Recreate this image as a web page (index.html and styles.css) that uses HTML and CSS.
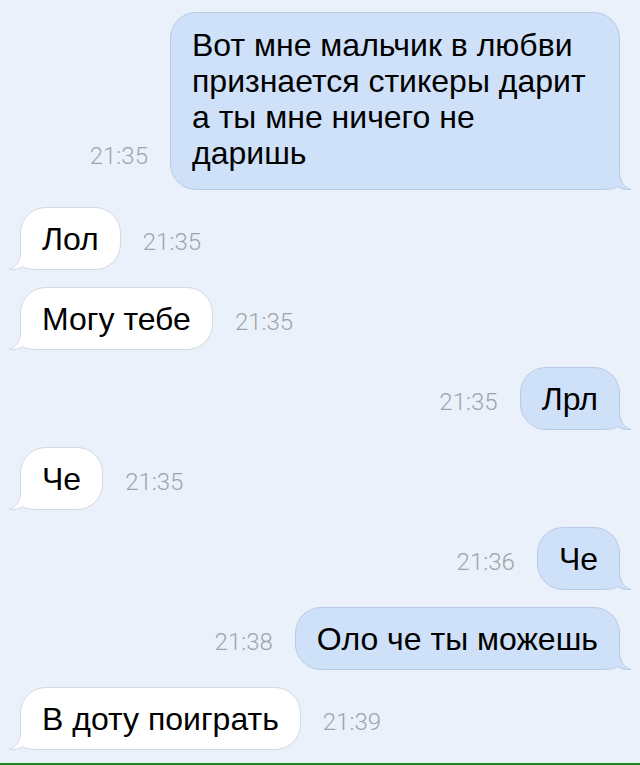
FILE: index.html
```html
<!DOCTYPE html>
<html lang="ru">
<head>
  <meta charset="UTF-8">
  <meta name="viewport" content="width=device-width, initial-scale=1">
  <title>Сообщения</title>
  <link rel="stylesheet" href="styles.css">
</head>
<body>

  <div class="chat">
    <div class="row out">
      <span class="time">21:35</span>
      <div class="bubble big">
        Вот мне мальчик в любви признается стикеры дарит а ты мне ничего не даришь
        <svg class="tail" width="32" height="40" viewBox="0 0 32 40"><path class="fill" d="M12.5 0 L12.5 22 C12.5 31 8 37 1 39.5 C6 40 11 38.8 14.5 36.5 C18.5 39 23 39.5 31 39.5 L32 39.5 L32 0 Z"/><path class="line" d="M12.5 0 L12.5 22 C12.5 31 8 37 1 39.5 C6 40 11 38.8 14.5 36.5 C18.5 39 23 39.5 32 39.5"/></svg>
      </div>
    </div>

    <div class="row in">
      <div class="bubble">
        Лол
        <svg class="tail" width="32" height="40" viewBox="0 0 32 40"><path class="fill" d="M12.5 0 L12.5 22 C12.5 31 8 37 1 39.5 C6 40 11 38.8 14.5 36.5 C18.5 39 23 39.5 31 39.5 L32 39.5 L32 0 Z"/><path class="line" d="M12.5 0 L12.5 22 C12.5 31 8 37 1 39.5 C6 40 11 38.8 14.5 36.5 C18.5 39 23 39.5 32 39.5"/></svg>
      </div>
      <span class="time">21:35</span>
    </div>

    <div class="row in">
      <div class="bubble">
        Могу тебе
        <svg class="tail" width="32" height="40" viewBox="0 0 32 40"><path class="fill" d="M12.5 0 L12.5 22 C12.5 31 8 37 1 39.5 C6 40 11 38.8 14.5 36.5 C18.5 39 23 39.5 31 39.5 L32 39.5 L32 0 Z"/><path class="line" d="M12.5 0 L12.5 22 C12.5 31 8 37 1 39.5 C6 40 11 38.8 14.5 36.5 C18.5 39 23 39.5 32 39.5"/></svg>
      </div>
      <span class="time">21:35</span>
    </div>

    <div class="row out">
      <span class="time">21:35</span>
      <div class="bubble">
        Лрл
        <svg class="tail" width="32" height="40" viewBox="0 0 32 40"><path class="fill" d="M12.5 0 L12.5 22 C12.5 31 8 37 1 39.5 C6 40 11 38.8 14.5 36.5 C18.5 39 23 39.5 31 39.5 L32 39.5 L32 0 Z"/><path class="line" d="M12.5 0 L12.5 22 C12.5 31 8 37 1 39.5 C6 40 11 38.8 14.5 36.5 C18.5 39 23 39.5 32 39.5"/></svg>
      </div>
    </div>

    <div class="row in">
      <div class="bubble">
        Че
        <svg class="tail" width="32" height="40" viewBox="0 0 32 40"><path class="fill" d="M12.5 0 L12.5 22 C12.5 31 8 37 1 39.5 C6 40 11 38.8 14.5 36.5 C18.5 39 23 39.5 31 39.5 L32 39.5 L32 0 Z"/><path class="line" d="M12.5 0 L12.5 22 C12.5 31 8 37 1 39.5 C6 40 11 38.8 14.5 36.5 C18.5 39 23 39.5 32 39.5"/></svg>
      </div>
      <span class="time">21:35</span>
    </div>

    <div class="row out">
      <span class="time">21:36</span>
      <div class="bubble">
        Че
        <svg class="tail" width="32" height="40" viewBox="0 0 32 40"><path class="fill" d="M12.5 0 L12.5 22 C12.5 31 8 37 1 39.5 C6 40 11 38.8 14.5 36.5 C18.5 39 23 39.5 31 39.5 L32 39.5 L32 0 Z"/><path class="line" d="M12.5 0 L12.5 22 C12.5 31 8 37 1 39.5 C6 40 11 38.8 14.5 36.5 C18.5 39 23 39.5 32 39.5"/></svg>
      </div>
    </div>

    <div class="row out">
      <span class="time">21:38</span>
      <div class="bubble">
        Оло че ты можешь
        <svg class="tail" width="32" height="40" viewBox="0 0 32 40"><path class="fill" d="M12.5 0 L12.5 22 C12.5 31 8 37 1 39.5 C6 40 11 38.8 14.5 36.5 C18.5 39 23 39.5 31 39.5 L32 39.5 L32 0 Z"/><path class="line" d="M12.5 0 L12.5 22 C12.5 31 8 37 1 39.5 C6 40 11 38.8 14.5 36.5 C18.5 39 23 39.5 32 39.5"/></svg>
      </div>
    </div>

    <div class="row in">
      <div class="bubble">
        В доту поиграть
        <svg class="tail" width="32" height="40" viewBox="0 0 32 40"><path class="fill" d="M12.5 0 L12.5 22 C12.5 31 8 37 1 39.5 C6 40 11 38.8 14.5 36.5 C18.5 39 23 39.5 31 39.5 L32 39.5 L32 0 Z"/><path class="line" d="M12.5 0 L12.5 22 C12.5 31 8 37 1 39.5 C6 40 11 38.8 14.5 36.5 C18.5 39 23 39.5 32 39.5"/></svg>
      </div>
      <span class="time">21:39</span>
    </div>
  </div>

  <div class="bar"></div>

</body>
</html>
```

FILE: styles.css
```css
body {
  font-family: "Liberation Sans", Arial, sans-serif;
  margin: 0;
  height: 100vh;
  background-color: #ebf1fa;
  display: flex;
  flex-direction: column;
  overflow: hidden;
}

.chat {
  display: flex;
  flex-direction: column;
  gap: 17px;
  padding: 12px 20px 0;
}

.row {
  display: flex;
  align-items: last baseline;
  gap: 22px;
}

.row.out {
  justify-content: flex-end;
}

.bubble {
  position: relative;
  max-width: 450px;
  box-sizing: border-box;
  padding: 13px 21px 12px;
  font-size: 32px;
  line-height: 36px;
  color: #000;
  border: 1px solid;
  border-radius: 26px;
}

.bubble.big {
  padding: 14px 21px 18px;
}

.in .bubble {
  background-color: #fff;
  border-color: #d4dae2;
  border-bottom-left-radius: 18px;
}

.out .bubble {
  background-color: #cfe1f8;
  border-color: #b9cbe4;
  border-bottom-right-radius: 18px;
}

.time {
  font-family: Roboto, "Liberation Sans", sans-serif;
  font-weight: 300;
  font-size: 24px;
  color: #9fa4ab;
  white-space: nowrap;
}

.tail {
  position: absolute;
  bottom: -1px;
  display: block;
}

.tail .line {
  fill: none;
  stroke-width: 1;
}

.in .tail {
  left: -13px;
}

.in .tail .fill {
  fill: #fff;
}

.in .tail .line {
  stroke: #d4dae2;
}

.out .tail {
  right: -13px;
  transform: scaleX(-1);
}

.out .tail .fill {
  fill: #cfe1f8;
}

.out .tail .line {
  stroke: #b9cbe4;
}

.bar {
  margin-top: auto;
  height: 2px;
  background-color: #1d8a22;
}
```
